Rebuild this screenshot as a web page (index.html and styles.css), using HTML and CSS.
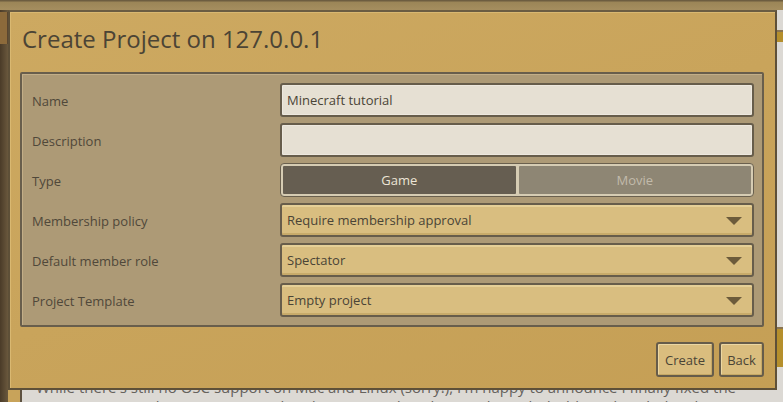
FILE: index.html
```html
<!DOCTYPE html>
<html>
<head>
<meta charset="utf-8">
<link rel="stylesheet" href="styles.css">
</head>
<body>
<div class="page">
  <div class="topbar"></div>
  <div class="page-row">
    <div class="side-dark"><div class="side-box"></div></div>
    <div class="side-gold"></div>
    <div class="main">
      <div class="right-tab tab-a"></div>
      <div class="right-tab tab-b"></div>
      <p class="article">While there's still no OSC support on Mac and Linux (sorry!), I'm happy to announce I finally fixed the OSC support on the engine (OSC related events) and mailing on the web dashboard (with details)</p>
    </div>
  </div>
</div>

<div class="dialog">
  <h1 class="dialog-title">Create Project on 127.0.0.1</h1>
  <div class="panel">
    <div class="form-grid">
      <label class="lbl">Name</label>
      <div class="field text-field">Minecraft tutorial</div>

      <label class="lbl">Description</label>
      <div class="field text-field"></div>

      <label class="lbl">Type</label>
      <div class="toggle">
        <div class="toggle-opt active">Game</div>
        <div class="toggle-opt">Movie</div>
      </div>

      <label class="lbl">Membership policy</label>
      <div class="field select-field"><span>Require membership approval</span><i class="arrow"></i></div>

      <label class="lbl">Default member role</label>
      <div class="field select-field"><span>Spectator</span><i class="arrow"></i></div>

      <label class="lbl">Project Template</label>
      <div class="field select-field"><span>Empty project</span><i class="arrow"></i></div>
    </div>
  </div>
  <div class="actions">
    <button class="btn btn-create">Create</button>
    <button class="btn btn-back">Back</button>
  </div>
</div>
</body>
</html>
```

FILE: styles.css
```css
* { box-sizing: border-box; }

html, body {
  margin: 0;
  padding: 0;
}

body {
  width: 783px;
  height: 402px;
  overflow: hidden;
  position: relative;
  font-family: "Open Sans", "DejaVu Sans", sans-serif;
  background: #d8d5cf;
}

/* ---------- backdrop page ---------- */
.page {
  display: flex;
  flex-direction: column;
  height: 402px;
  overflow: hidden;
}

.topbar {
  height: 10px;
  flex: none;
  background: linear-gradient(#6d5d40 0, #6d5d40 1px, #9b8557 2px, #a58e5f 100%);
}

.page-row {
  flex: 1;
  display: flex;
  min-height: 0;
}

.side-dark {
  width: 8px;
  background: linear-gradient(90deg, #4a3b28, #6a583d);
  padding-top: 2px;
}

.side-box {
  height: 32px;
  background: #8c6a3b;
  border-right: 1px solid #5a4630;
}

.side-gold {
  width: 14px;
  background: #c8a35a;
  border-right: 2px solid #5d5140;
}

.main {
  flex: 1;
  position: relative;
  overflow: hidden;
  background: #dcd9d4;
  padding: 368px 20px 0 14px;
}

.right-tab {
  position: absolute;
  right: 0;
  width: 12px;
  background: #b58f2c;
  border-top: 2px solid #8a7450;
}

.tab-a { top: 20px; height: 12px; }
.tab-b { top: 317px; height: 40px; }

.article {
  margin: 0;
  font-size: 15px;
  line-height: 19px;
  color: #66625d;
}

/* ---------- dialog ---------- */
.dialog {
  position: absolute;
  left: 8px;
  top: 10px;
  width: 769px;
  height: 380px;
  border: 2px solid #5e5038;
  border-top-color: #6a5c42;
  box-shadow: inset 1px 1px 0 #d9b871;
  background: linear-gradient(160deg, #cda961 0%, #c9a45b 50%, #c59f55 100%);
  padding: 12px 10px 0 10px;
}

.dialog-title {
  margin: 0 0 18px 2px;
  font-size: 24px;
  line-height: 30px;
  font-weight: 400;
  color: #4b4435;
  height: 30px;
}

.panel {
  width: 744px;
  border: 2px solid #685e4c;
  border-radius: 2px;
  background: #ad9a76;
  box-shadow: inset 1px 1px 0 #c2ae88;
  padding: 9px 8px 8px 10px;
}

.form-grid {
  display: grid;
  grid-template-columns: 248px 474px;
  grid-auto-rows: 34px;
  row-gap: 6px;
}

.lbl {
  display: flex;
  align-items: center;
  font-size: 13px;
  color: #50483a;
  padding-top: 1px;
}

.field {
  border: 2px solid #675d4b;
  border-radius: 3px;
  display: flex;
  align-items: center;
  padding: 0 5px;
  font-size: 13px;
  color: #4a4436;
}

.text-field {
  background: #e6e0d3;
  box-shadow: inset 0 0 0 1px #eee9df;
}

.select-field {
  background: #d9be80;
  box-shadow: inset 0 2px 0 #e6d097, inset 0 -2px 0 #c8ab6a;
  justify-content: space-between;
  padding-right: 10px;
}

.arrow {
  width: 0;
  height: 0;
  border-left: 8px solid transparent;
  border-right: 8px solid transparent;
  border-top: 8px solid #6c5b3b;
  margin-top: 1px;
}

.toggle {
  display: flex;
  gap: 3px;
  border: 1px solid #6a604e;
  border-radius: 4px;
  background: #d6ccb3;
  padding: 2px;
}

.toggle-opt {
  flex: 1;
  display: flex;
  align-items: center;
  justify-content: center;
  font-size: 13px;
  color: #c2bbab;
  background: #8e8674;
  border-radius: 1px;
}

.toggle-opt.active {
  background: #665e51;
  color: #ece5d6;
}

.actions {
  display: flex;
  justify-content: flex-end;
  gap: 5px;
  width: 744px;
  margin-top: 15px;
}

.btn {
  height: 35px;
  border: 2px solid #665c4a;
  border-radius: 3px;
  background: #dabd7e;
  box-shadow: inset 1px 1px 0 #ecd7a2, inset -1px -1px 0 #c7a965;
  font-family: "Open Sans", "DejaVu Sans", sans-serif;
  font-size: 13px;
  color: #4a4436;
  padding: 0;
}

.btn-create { width: 58px; }
.btn-back { width: 45px; }
```
